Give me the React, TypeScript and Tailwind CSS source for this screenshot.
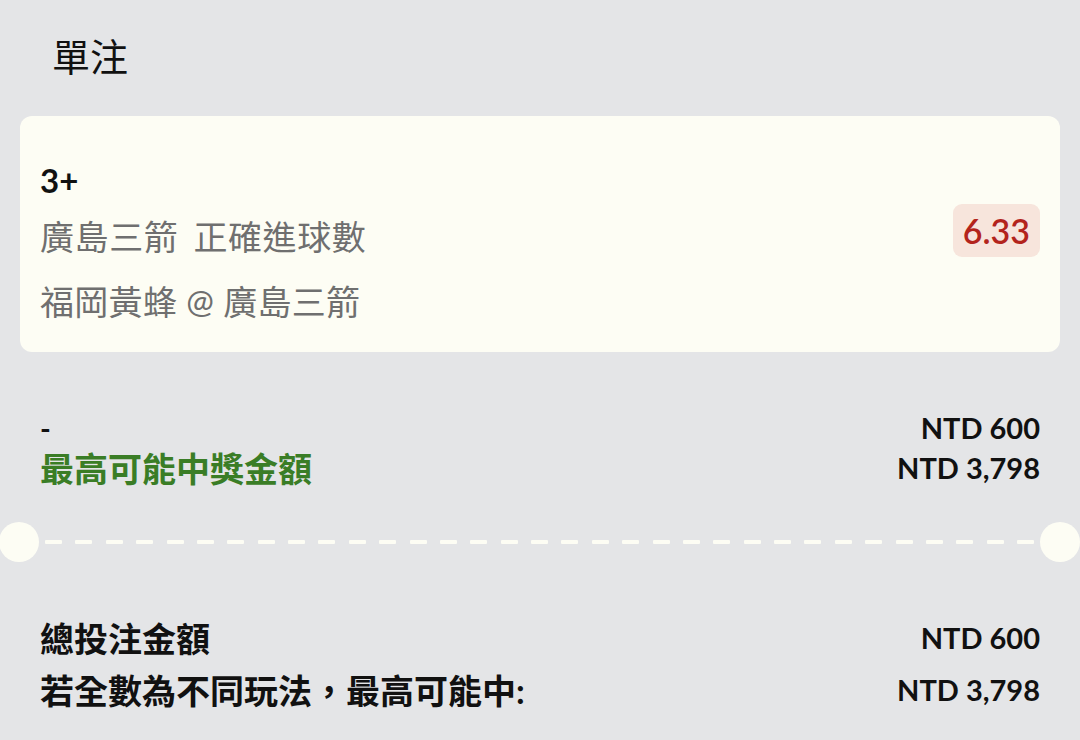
import React from "react";

const FONT = { fontFamily: 'Lato, "Noto Sans CJK TC", sans-serif' };

export default function App() {
  const dashes = Array.from({ length: 33 });
  return (
    <div
      className="w-[1080px] h-[740px] bg-[#e4e5e7] overflow-hidden flex flex-col text-[#111111]"
      style={FONT}
    >
      <div className="pt-[30px] pl-[52px] text-[38px] leading-[53px]">單注</div>

      <div className="mt-[33px] mx-[20px] h-[236px] rounded-[12px] bg-[#fdfdf4] flex justify-between pl-[20px] pr-[20px]">
        <div className="flex flex-col pt-[44px]">
          <div className="h-[40px] leading-[40px] text-[33px] font-bold">3+</div>
          <div className="mt-[17px] h-[40px] leading-[40px] text-[34px] tracking-[0.6px] text-[#6f6f6f] whitespace-nowrap">
            廣島三箭<span className="inline-block w-[15px]"> </span>正確進球數
          </div>
          <div className="mt-[25px] h-[40px] leading-[40px] text-[34px] tracking-[0.3px] text-[#6f6f6f] whitespace-nowrap">
            福岡黃蜂<span className="inline-block w-[46px] text-center text-[33px] leading-[36px] -translate-y-[2px]">@</span>廣島三箭
          </div>
        </div>
        <div className="mt-[88px] self-start h-[53px] px-[10px] rounded-[9px] bg-[#f7e5dc] flex items-center text-[34px] text-[#b3241c] font-semibold">
          6.33
        </div>
      </div>

      <div className="mt-[56px] px-[40px] flex flex-col">
        <div className="h-[40px] flex items-center justify-between">
          <span className="text-[29px] font-bold">-</span>
          <span className="text-[29px] font-bold">NTD 600</span>
        </div>
        <div className="h-[40px] flex items-center justify-between">
          <span className="text-[34px] font-bold text-[#3a7d26]">最高可能中獎金額</span>
          <span className="text-[29px] font-bold">NTD 3,798</span>
        </div>
      </div>

      <div className="mt-[34px] h-[40px] flex items-center">
        <div className="w-[40px] h-[40px] rounded-full bg-[#fdfdf4] -ml-[1px] shrink-0" />
        <div className="flex-1 flex justify-between items-center px-[6px]">
          {dashes.map((_, i) => (
            <div key={i} className="w-[17px] h-[4px] rounded-[1px] bg-[#fdfdf4]" />
          ))}
        </div>
        <div className="w-[40px] h-[40px] rounded-full bg-[#fdfdf4] shrink-0" />
      </div>

      <div className="mt-[50px] px-[40px] flex flex-col">
        <div className="h-[52px] flex items-center justify-between">
          <span className="text-[34px] font-bold">總投注金額</span>
          <span className="text-[29px] font-bold">NTD 600</span>
        </div>
        <div className="h-[52px] flex items-center justify-between">
          <span className="text-[34px] font-bold">若全數為不同玩法，最高可能中:</span>
          <span className="text-[29px] font-bold">NTD 3,798</span>
        </div>
      </div>
    </div>
  );
}
